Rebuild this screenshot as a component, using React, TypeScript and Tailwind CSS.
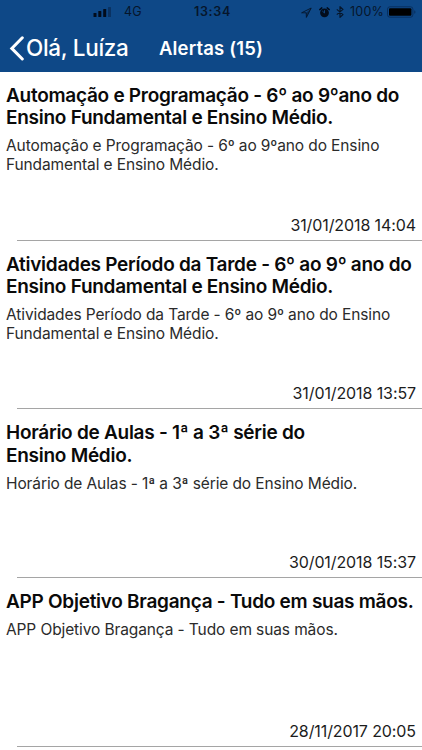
type Alert = {
  title: string[];
  body: string[];
  date: string;
};

const alerts: Alert[] = [
  {
    title: ["Automação e Programação - 6º ao 9ºano do", "Ensino Fundamental e Ensino Médio."],
    body: ["Automação e Programação - 6º ao 9ºano do Ensino", "Fundamental e Ensino Médio."],
    date: "31/01/2018 14:04",
  },
  {
    title: ["Atividades Período da Tarde - 6º ao 9º ano do", "Ensino Fundamental e Ensino Médio."],
    body: ["Atividades Período da Tarde - 6º ao 9º ano do Ensino", "Fundamental e Ensino Médio."],
    date: "31/01/2018 13:57",
  },
  {
    title: ["Horário de Aulas - 1ª a 3ª série do", "Ensino Médio."],
    body: ["Horário de Aulas - 1ª a 3ª série do Ensino Médio."],
    date: "30/01/2018 15:37",
  },
  {
    title: ["APP Objetivo Bragança - Tudo em suas mãos."],
    body: ["APP Objetivo Bragança - Tudo em suas mãos."],
    date: "28/11/2017 20:05",
  },
];

function StatusBar() {
  return (
    <div className="grid h-6 grid-cols-[1fr_auto_1fr] items-center text-[#06162b]">
      <div className="flex items-center gap-[13px] pl-[93px]">
        <svg className="h-[10px] w-[18px]" viewBox="0 0 18 10" fill="#020c1c">
          <rect x="0.5" y="6" width="3" height="4" rx="0.6" />
          <rect x="5.3" y="4" width="3" height="6" rx="0.6" />
          <rect x="10.2" y="2" width="3" height="8" rx="0.6" />
          <rect x="15" y="0" width="3" height="10" rx="0.6" opacity="0.35" />
        </svg>
        <span className="text-[12.5px] tracking-[0.2px]">4G</span>
      </div>
      <span className="pl-[3px] text-[12.5px] font-semibold tracking-[0.7px]">13:34</span>
      <div className="flex items-center justify-end pr-[6px]">
        {/* Location */}
        <svg className="mr-[7px] h-[11px] w-[11px]" viewBox="0 0 11 11" fill="none">
          <path d="M10.2 1 0.6 5.8h4.6l0.2 4.6z" stroke="currentColor" strokeWidth="0.9" strokeLinejoin="round" />
          <path d="M10.2 1 5.2 5.8l0.2 4.6z" fill="currentColor" opacity="0.5" />
        </svg>
        {/* Alarm clock */}
        <svg className="mr-[6px] h-[11px] w-[11px]" viewBox="0 0 11 11" fill="none">
          <circle cx="5.5" cy="5.8" r="4.4" fill="#020c1c" />
          <path d="M0.8 2.6 2.8 0.9M10.2 2.6 8.2 0.9" stroke="#020c1c" strokeWidth="1.5" strokeLinecap="round" />
          <path d="M3.3 4 5.5 6V3.2" stroke="#0e4887" strokeWidth="0.9" />
        </svg>
        {/* Bluetooth */}
        <svg className="mr-[6px] h-[12px] w-[8px]" viewBox="0 0 8 12" fill="none" stroke="currentColor">
          <path d="M0.8 3.4 7 8.6 4 11.3V0.7L7 3.4 0.8 8.6" strokeWidth="1.2" strokeLinejoin="round" />
        </svg>
        <span className="mr-[3px] text-[12.5px] tracking-[0.2px]">100%</span>
        <svg className="h-[12px] w-[29px]" viewBox="0 0 29 12" fill="none">
          <rect x="0.5" y="0.8" width="25.4" height="10.4" rx="2.4" stroke="#082d5b" strokeWidth="0.9" />
          <rect x="2" y="2.3" width="22.4" height="7.4" rx="1" fill="#000" />
          <path d="M27.3 4.2c1.5 0.5 1.5 3.1 0 3.6z" fill="#082d5b" />
        </svg>
      </div>
    </div>
  );
}

function NavBar() {
  return (
    <div className="flex h-12 items-center text-white">
      <button className="flex w-[159px] items-center pl-[9px]">
        <svg className="h-[25px] w-[15px]" viewBox="0 0 15 25" fill="none" stroke="currentColor">
          <path d="M13.3 1.8 2.8 12.4l10.5 10.6" strokeWidth="3" strokeLinecap="round" />
        </svg>
        <span className="ml-[2px] whitespace-nowrap text-[22.5px] font-medium leading-none tracking-[-0.3px]">
          Olá, Luíza
        </span>
      </button>
      <h1 className="text-[18.5px] font-semibold leading-none tracking-[0.15px]">Alertas (15)</h1>
    </div>
  );
}

function AlertRow({ alert }: { alert: Alert }) {
  return (
    <li className="flex h-[168.7px] flex-col pt-[13px]">
      <h2 className="whitespace-nowrap pl-[6px] text-[19px] font-semibold leading-[22.2px] tracking-[-0.27px] text-[#0a0a0a]">
        {alert.title.map((line) => (
          <span key={line} className="block">
            {line}
          </span>
        ))}
      </h2>
      <p className="mt-[8px] whitespace-nowrap pl-[6px] text-[15.5px] leading-[18.8px] tracking-[-0.11px] text-[#2b2b2b]">
        {alert.body.map((line) => (
          <span key={line} className="block">
            {line}
          </span>
        ))}
      </p>
      <time className="mb-[5px] mt-auto pr-[6px] text-right text-[16px] leading-[20px] tracking-[-0.1px] text-[#1c1c1c]">
        {alert.date}
      </time>
      <div className="ml-[17px] h-px shrink-0 bg-[#a5a5a5]" />
    </li>
  );
}

export default function App() {
  return (
    <div className="h-[750px] overflow-hidden bg-white font-['Inter',sans-serif]">
      <header className="h-[72px] bg-[#0e4887]">
        <StatusBar />
        <NavBar />
      </header>
      <ul>
        {alerts.map((alert) => (
          <AlertRow key={alert.date} alert={alert} />
        ))}
      </ul>
    </div>
  );
}
